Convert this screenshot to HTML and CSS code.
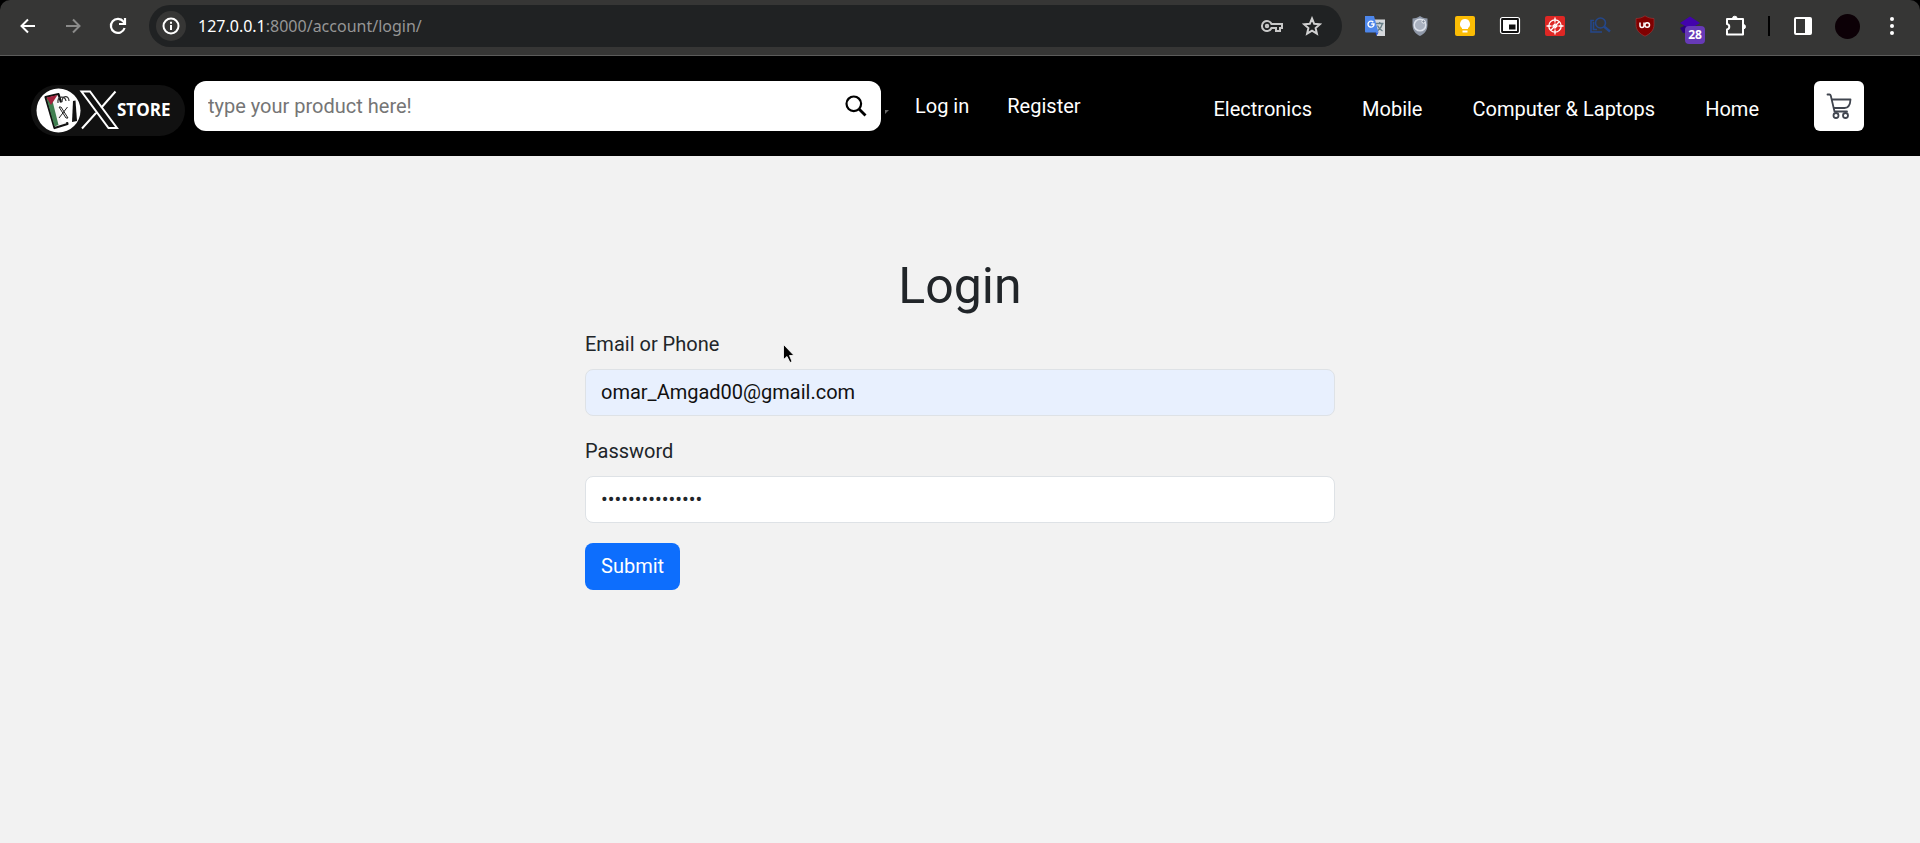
FILE: index.html
```html
<!DOCTYPE html>
<html lang="en">
<head>
<meta charset="utf-8">
<meta name="viewport" content="width=device-width, initial-scale=1">
<title>Login</title>
<link rel="stylesheet" href="styles.css">
</head>
<body>
<div class="chrome">
  <div class="toolbar">
    <button class="tool" aria-label="Back"><svg width="16" height="16" viewBox="0 0 16 16" fill="none" stroke="#fff" stroke-width="2"><path d="M15 8H2M8 1.5 1.5 8 8 14.5"/></svg></button>
    <button class="tool" aria-label="Forward"><svg width="16" height="16" viewBox="0 0 16 16" fill="none" stroke="#8b8b8a" stroke-width="2"><path d="M1 8h13M8 1.5 14.500 8 8 14.500"/></svg></button>
    <button class="tool" aria-label="Reload"><svg width="18" height="18" viewBox="0 0 18 18" fill="none" stroke="#fff" stroke-width="2.200"><path d="M15.600 11A7 7 0 1 1 14.500 4.700L16 6.500"/><path d="M16 1v6h-6"/></svg></button>
    <div class="omnibox">
      <button class="site-info" aria-label="Site information"><svg width="18" height="18" viewBox="0 0 18 18" fill="none" stroke="#fff" stroke-width="2"><circle cx="9" cy="9" r="7.500"/><path d="M9 8v5M9 4.800v2"/></svg></button>
      <span class="url"><span class="host">127.0.0.1</span>:8000/account/login/</span>
      <button class="tool" aria-label="Passwords"><svg width="24" height="16" viewBox="0 0 24 16" fill="none" stroke="#c7c7c7" stroke-width="2"><path d="M11.500 6H22v4h-2v3h-4v-3h-4.500A5 5 0 1 1 11.500 6Z"/><circle cx="7" cy="8" r="1.200"/></svg></button>
      <button class="tool" aria-label="Bookmark"><svg width="20" height="20" viewBox="0 0 20 20" fill="none" stroke="#d0d0d0" stroke-width="2"><path d="m10 2.500 2.200 5.300 5.700.5-4.300 3.700 1.300 5.600L10 14.600l-4.900 3 1.300-5.600L2.100 8.300l5.700-.5Z"/></svg></button>
    </div>
    <div class="extensions">
      <button class="tool" aria-label="Translate"><svg width="22" height="22" viewBox="0 0 22 22"><path d="M9 4.500h12V21H13Z" fill="#d5d8dc"/><path d="M12 8.500h7.500M15.700 7v1.500M18.500 8.500c-1 4-3 6-5 7.500M13.500 10.500c1 2.500 3 4.500 5 5.500" fill="none" stroke="#667d86" stroke-width="1.300"/><path d="M1 1h9l4.500 16.500H2a1 1 0 0 1-1-1Z" fill="#4d86ea"/><path d="M11.500 17.500h3L12.500 21Z" fill="#2454d8"/><path d="M9.300 7.200A3 3 0 1 0 10 9H7.200" fill="none" stroke="#fff" stroke-width="1.400"/></svg></button>
      <button class="tool" aria-label="Shield"><svg width="20" height="22" viewBox="0 0 20 22"><path d="M10 1c3 2 5 2.300 7.500 2.500V10c0 6-3.500 9-7.500 11-4-2-7.500-5-7.500-11V3.500C5 3.300 7 3 10 1Z" fill="#8f98a8"/><circle cx="10" cy="10" r="5.800" fill="#aab2c0" stroke="#dce1ea" stroke-width="1.500"/><circle cx="13.500" cy="6.500" r="1.600" fill="#7d8798" stroke="#eef1f5"/></svg></button>
      <button class="tool" aria-label="Keep"><svg width="22" height="22" viewBox="0 0 22 22"><rect x="1" y="1" width="20" height="20" rx="2" fill="#fbbc04"/><path d="M11 4a5 5 0 0 0-3 9v1h6v-1a5 5 0 0 0-3-9ZM8.500 15.500h5v2h-5z" fill="#fff"/></svg></button>
      <button class="tool" aria-label="Picture in picture"><svg width="22" height="22" viewBox="0 0 22 22"><rect x="1.500" y="2.500" width="19" height="16" rx="2" fill="#111" stroke="#fff" stroke-width="1.200"/><rect x="4" y="5" width="14" height="11" fill="#fff"/><rect x="10" y="9.500" width="6.500" height="5" fill="#111"/></svg></button>
      <button class="tool" aria-label="Blocker"><svg width="22" height="22" viewBox="0 0 22 22"><rect x="1" y="1" width="20" height="20" rx="2" fill="#de2724"/><g fill="none" stroke="#fff" stroke-width="1.300"><circle cx="11" cy="11" r="6.200"/><path d="M11 2.500v5M11 14.500v5M2.500 11h5M14.500 11h5M7 15l8-8M8.500 11.500l3-3M10.500 13.500l3-3"/></g></svg></button>
      <button class="tool" aria-label="Page search"><svg width="22" height="22" viewBox="0 0 22 22" fill="none" stroke="#24478a" stroke-width="1.600"><path d="M5 5.500H2V17h11M4.500 7v7.500H8"/><circle cx="11.500" cy="8" r="5"/><path d="m15 11.500 6 5" stroke-width="2.400"/></svg></button>
      <button class="tool" aria-label="uBlock Origin"><svg width="20" height="22" viewBox="0 0 20 22"><path d="M10 .8c3 2 6 2.700 9 2.700v6c0 6-4 9.500-9 11.700C5 19 1 15.500 1 9.500v-6c3 0 6-.7 9-2.700Z" fill="#800000" stroke="#a13a3a" stroke-width=".6"/><path d="M5 7.500v3a2 2 0 0 0 4 0v-3" fill="none" stroke="#fff" stroke-width="1.500"/><circle cx="12.200" cy="10" r="2.300" fill="none" stroke="#fff" stroke-width="1.500"/></svg></button>
      <button class="tool badge-tool" aria-label="Layers, 28"><svg width="22" height="22" viewBox="0 0 22 22"><path d="m1 13 10-5 10 5-9 5H4Z" fill="#29007d"/><path d="M11 1.500 21 8l-10 6L1 8Z" fill="#4203ad"/></svg><span class="badge">28</span></button>
      <button class="tool" aria-label="Extensions"><svg width="22" height="22" viewBox="0 0 22 22" fill="none" stroke="#fff" stroke-width="2" stroke-linejoin="round"><path d="M3 4h16v5v10.500H3v-5a2.800 2.800 0 0 0 0-5.500V4Z"/><path d="M8.500 3.500a2.300 2.300 0 0 1 4.600 0ZM19.300 9.500a2.200 2.200 0 0 1 0 4.400Z" fill="#fff" stroke-width="1"/></svg></button>
      <span class="divider"></span>
      <button class="tool" aria-label="Side panel"><svg width="20" height="20" viewBox="0 0 20 20"><rect x="2" y="2" width="16" height="16" rx="1" fill="none" stroke="#fff" stroke-width="2"/><path d="M12 2h6v16h-6z" fill="#fff"/></svg></button>
      <button class="avatar" aria-label="Profile"></button>
      <button class="tool" aria-label="Menu"><svg width="6" height="20" viewBox="0 0 6 20" fill="#fff"><circle cx="3" cy="3" r="2"/><circle cx="3" cy="10" r="2"/><circle cx="3" cy="17" r="2"/></svg></button>
    </div>
  </div>
</div>

<header class="header">
  <a class="logo" href="#" aria-label="X Store">
    <svg width="154" height="51" viewBox="0 0 154 51">
      <rect width="154" height="51" rx="25.500" fill="#111"/>
      <circle cx="27.500" cy="25.500" r="22" fill="#fff"/>
      <path d="m14.500 12 13-3 9 30-13 4Z" fill="#f4f4f4" stroke="#111" stroke-width="2.200" stroke-linejoin="round"/>
      <path d="m15.500 13 5-1 7 28-4 1.500Z" fill="#3f7f50"/>
      <path d="m15.500 12.500 11-2.500-6.500 10Z" fill="#a3213c"/>
      <path d="M26 18 42 16l1 20-12 2Z" fill="#fff"/>
      <path d="m42 16 2.500-.5L46 36l-5 1Z" fill="#111"/>
      <path d="M27 18c-1-7 7-8 8-2M31 17c0-7 7-7 7-1" fill="none" stroke="#333" stroke-width="1.200"/>
      <path d="M28 22h2l7 11h-2ZM36.500 22 28 33" fill="none" stroke="#222" stroke-width="1"/>
      <path d="M50.500 6.500h8.500l27 36.500h-8.500ZM84.500 6.500 70 23M65 28 51 43.500" fill="none" stroke="#fff" stroke-width="2"/>
      <text class="logo-text" x="86" y="31">STORE</text>
    </svg>
  </a>
  <form class="search" role="search">
    <input class="search-input" type="search" placeholder="type your product here!" aria-label="Search products">
    <button class="search-button" type="button" aria-label="Search"><svg width="22" height="22" viewBox="0 0 22 22" fill="none" stroke="#000" stroke-width="2.200"><circle cx="8.800" cy="8.800" r="7.300"/><path d="m14 14 6.500 6.500" stroke-width="2.800"/></svg></button>
  </form>
  <nav class="account" aria-label="Account">
    <svg class="caret" width="5" height="5" viewBox="0 0 5 5"><path d="M0 0h4L0 4Z" fill="#666"/></svg>
    <a href="#">Log in</a>
    <a href="#">Register</a>
  </nav>
  <nav class="categories" aria-label="Categories">
    <a href="#">Electronics</a>
    <a href="#">Mobile</a>
    <a href="#">Computer &amp; Laptops</a>
    <a href="#">Home</a>
  </nav>
  <button class="cart" aria-label="Cart"><svg width="26" height="26" viewBox="0 0 26 26" fill="none" stroke="#40454f" stroke-width="1.800" stroke-linecap="round" stroke-linejoin="round"><path d="M1.500 1.500h2q1 0 1.300 1.200L8.500 18.500H21M6 6.500h18.500q-.5 8.500-6 8.500H8"/><circle cx="10" cy="22.500" r="2.500"/><circle cx="19.500" cy="22.500" r="2.500"/></svg></button>
</header>

<main class="main">
  <form class="login">
    <h1 class="title">Login</h1>
    <div class="field">
      <label for="email">Email or Phone</label>
      <input class="control filled" id="email" type="text" value="omar_Amgad00@gmail.com">
    </div>
    <div class="field">
      <label for="password">Password</label>
      <input class="control" id="password" type="password" value="password1234567">
    </div>
    <button class="submit" type="button">Submit</button>
    <svg class="pointer" width="12" height="20" viewBox="0 0 12 20"><path d="M.5.500v15l3.500-3 3 6 2-1-2.500-6H11Z" fill="#000" stroke="#fff" stroke-width=".8"/></svg>
  </form>
</main>
</body>
</html>
```
FILE: styles.css
```css
*, *::before, *::after { box-sizing: border-box; }

body {
  margin: 0;
  min-height: 100vh;
  background: #f2f2f2;
  color: #212529;
  font: 20px/30px Roboto, sans-serif;
}

button, input { margin: 0; font: inherit; color: inherit; }

button {
  padding: 0;
  border: 0;
  background: none;
  cursor: pointer;
}

a { color: inherit; text-decoration: none; }
svg { display: block; flex: none; }

.chrome { background: #000; }

.toolbar {
  display: flex;
  align-items: center;
  height: 56px;
  padding: 0 14px 3px;
  border-bottom: 1px solid #5c5c5b;
  border-radius: 10px 10px 0 0;
  background: #363635;
}

.tool {
  display: flex;
  flex: none;
  align-items: center;
  justify-content: center;
  width: 28px;
  height: 28px;
}

.toolbar > .tool { margin-right: 17px; }

.omnibox {
  display: flex;
  flex: 1;
  align-items: center;
  gap: 12px;
  min-width: 0;
  height: 42px;
  padding: 0 16px 0 7px;
  border-radius: 21px;
  background: #202223;
}

.site-info {
  display: flex;
  flex: none;
  align-items: center;
  justify-content: center;
  width: 30px;
  height: 30px;
  border-radius: 50%;
  background: #363635;
}

.url {
  flex: 1;
  overflow: hidden;
  color: #969696;
  font: 16px/24px "Noto Sans", sans-serif;
  white-space: nowrap;
}

.host { color: #fff; }

.extensions {
  display: flex;
  align-items: center;
  gap: 17px;
  padding-left: 19px;
}

.badge-tool { position: relative; }

.badge {
  position: absolute;
  top: 14px;
  left: 9px;
  width: 20px;
  border-radius: 4px;
  background: #673ab7;
  color: #fff;
  font: bold 12px/18px "Open Sans", sans-serif;
  text-align: center;
}

.divider {
  width: 2px;
  height: 20px;
  margin: 0 2px;
  background: #000;
}

.avatar {
  width: 25px;
  height: 25px;
  margin: 0 1px;
  border-radius: 50%;
  background: #0c0006;
}

.header {
  display: flex;
  align-items: center;
  min-height: 100px;
  padding: 0 56px 0 31px;
  background: #000;
  color: #fff;
}

.logo { margin-top: 9px; }

.logo-text {
  fill: #fff;
  font: bold 17px "Open Sans", sans-serif;
}

.search {
  display: flex;
  flex: 0 1 687px;
  align-items: center;
  min-width: 0;
  height: 50px;
  margin-left: 9px;
  padding: 0 14px;
  border-radius: 12px;
  background: #fff;
}

.search-input {
  flex: 1;
  min-width: 0;
  padding: 0;
  border: 0;
  outline: 0;
  background: none;
  color: #212529;
}

.search-input::placeholder { color: #757575; }

.account, .categories {
  display: flex;
  align-items: center;
  white-space: nowrap;
}

.account { gap: 38px; margin-left: 4px; }
.caret { margin: 12px -13px 0 0; }

.categories {
  gap: 50px;
  margin: 5px 0 0 auto;
  padding-left: 50px;
}

.cart {
  display: flex;
  flex: none;
  align-items: center;
  justify-content: center;
  width: 50px;
  height: 50px;
  margin-left: 55px;
  border-radius: 6px;
  background: #fff;
}

.main { padding: 100px 20px 40px; }

.login {
  position: relative;
  max-width: 750px;
  margin: 0 auto;
}

.title {
  margin: 0 0 13px;
  font-size: 50px;
  font-weight: 400;
  line-height: 60px;
  text-align: center;
}

.field {
  display: flex;
  flex-direction: column;
  gap: 10px;
  margin-bottom: 20px;
}

.control {
  width: 100%;
  height: 47px;
  padding: 0 15px 1px;
  border: 1px solid #dee2e6;
  border-radius: 8px;
  outline: 0;
  background: #fff;
}

.filled { background: #e8f0fe; color: #111; }

.submit {
  height: 47px;
  padding: 0 16px 1px;
  border-radius: 8px;
  background: #0d6efd;
  color: #fff;
}

.pointer { position: absolute; top: 88px; left: 198px; }
```
